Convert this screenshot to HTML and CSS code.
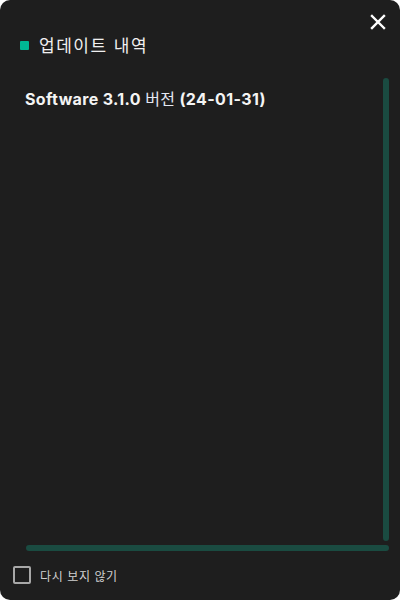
FILE: index.html
```html
<!DOCTYPE html>
<html lang="ko">
<head>
<meta charset="utf-8">
<link rel="stylesheet" href="styles.css">
</head>
<body>
<div class="card">
  <button class="close" aria-label="닫기">
    <svg width="16" height="16" viewBox="0 0 16 16"><path d="M2 2 L14 14 M14 2 L2 14" stroke="#fff" stroke-width="2.4" stroke-linecap="square"/></svg>
  </button>
  <div class="header">
    <span class="dot"></span>
    <span class="title">업데이트 내역</span>
  </div>
  <div class="body">
    <div class="content">
      <p class="version">Software 3.1.0 <span class="ko">버전</span> (24-01-31)</p>
    </div>
    <div class="vbar"></div>
    <div class="hbar"></div>
  </div>
  <label class="footer">
    <span class="check"></span>
    <span class="footer-text">다시 보지 않기</span>
  </label>
</div>
</body>
</html>
```
FILE: styles.css
```css
* { box-sizing: border-box; }
html, body { margin: 0; padding: 0; background: #ffffff; }
body { width: 400px; height: 600px; overflow: hidden; }
.card {
  position: relative;
  width: 400px;
  height: 600px;
  background: #1e1e1e;
  border-radius: 10px;
  display: flex;
  flex-direction: column;
  font-family: Inter, "Noto Sans CJK KR", sans-serif;
  color: #f2f2f2;
}
.close {
  position: absolute;
  top: 14px;
  right: 14px;
  width: 16px;
  height: 16px;
  padding: 0;
  border: 0;
  background: transparent;
  display: flex;
}
.header {
  display: flex;
  align-items: center;
  gap: 10px;
  padding: 34px 20px 0 20px;
  height: 56px;
}
.dot {
  width: 9px;
  height: 9px;
  background: #00b894;
  border-radius: 1px;
}
.title {
  font-family: "Noto Sans CJK KR", sans-serif;
  font-size: 17px;
  line-height: 22px;
  color: #f0f0f0;
  letter-spacing: 1.5px;
}
.body {
  flex: 1;
  margin: 22px 11px 0 25px;
  display: grid;
  grid-template-columns: 1fr 6px;
  grid-template-rows: 1fr 6px;
  row-gap: 4px;
}
.content { padding-top: 10px; }
.version {
  margin: 0;
  font-size: 16px;
  line-height: 20px;
  font-weight: 700;
  letter-spacing: 0.36px;
  color: #f4f4f4;
}
.ko {
  font-family: "Noto Sans CJK KR", sans-serif;
  font-weight: 400;
  color: #e4e8f2;
}
.vbar {
  grid-column: 2;
  grid-row: 1;
  background: #1a4b41;
  border-radius: 3px;
}
.hbar {
  grid-column: 1 / 3;
  grid-row: 2;
  margin-left: 1px;
  background: #1a4b41;
  border-radius: 3px;
}
.footer {
  height: 49px;
  display: flex;
  align-items: center;
  gap: 9px;
  padding-left: 13px;
  padding-bottom: 1px;
}
.check {
  width: 18px;
  height: 18px;
  border: 2px solid #a8a8a8;
  border-radius: 2px;
}
.footer-text {
  font-family: "Noto Sans CJK KR", sans-serif;
  font-size: 12px;
  letter-spacing: 0.6px;
  color: #d0d0d0;
}
```
